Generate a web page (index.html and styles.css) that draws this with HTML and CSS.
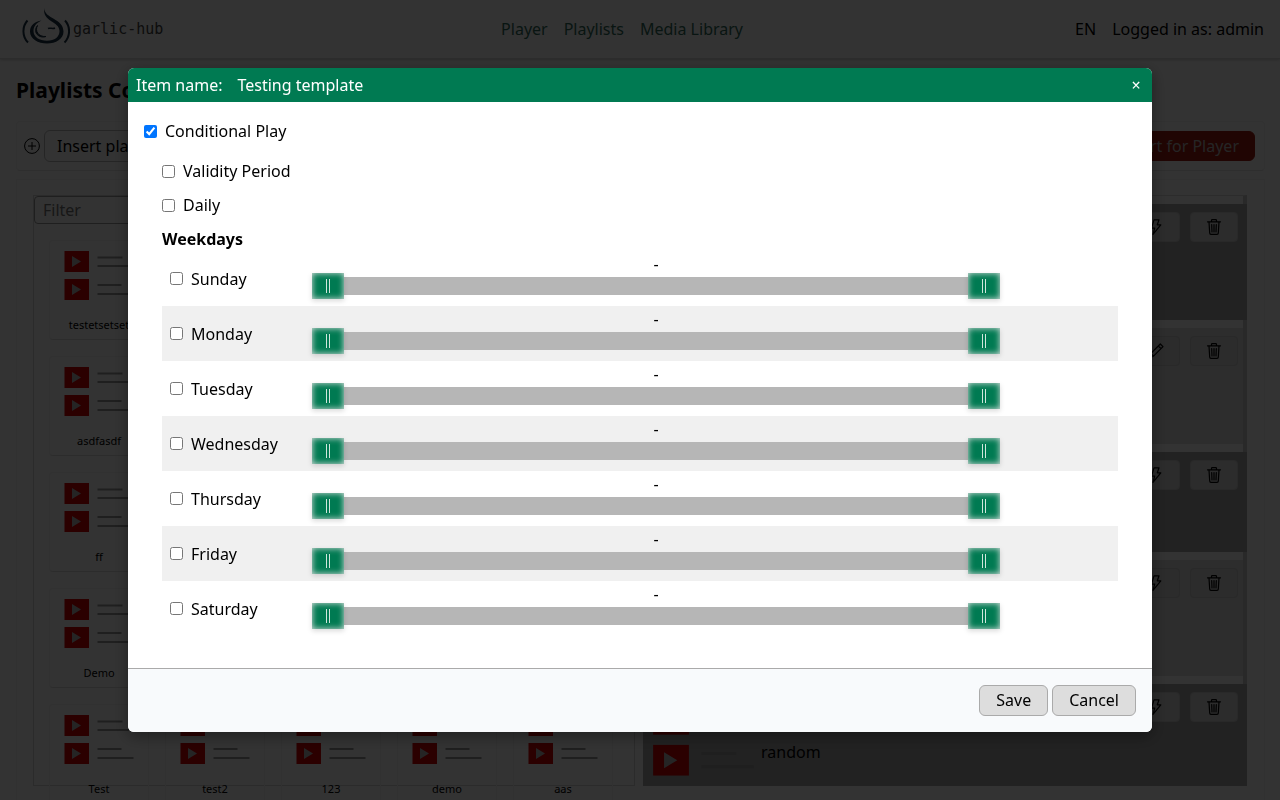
FILE: index.html
```html
<!DOCTYPE html>
<html lang="en">
<head>
  <meta charset="UTF-8" />
  <meta name="viewport" content="width=device-width, initial-scale=1" />
  <title>garlic-hub - Playlists</title>
  <link rel="stylesheet" href="styles.css">
</head>
<body>

<!-- shared icons -->
<svg class="sprite" aria-hidden="true">
  <symbol id="playlist" viewBox="0 0 70 50">
    <rect x="0.500" y="0" width="24.500" height="21" fill="#d40000"/>
    <path d="M8 5v11l9-5.500z" fill="#bbb"/>
    <path d="M33.500 6.500h25M33.500 15h36" stroke="#999" stroke-width="2"/>
    <rect x="0.500" y="28" width="24.500" height="21" fill="#d40000"/>
    <path d="M8 33v11l9-5.500z" fill="#bbb"/>
    <path d="M33.500 34h24M33.500 43h36" stroke="#999" stroke-width="2"/>
  </symbol>
  <symbol id="trash" viewBox="0 0 16 16">
    <path d="M1.500 2.800h13M5.500 2.500v-1a.8.8 0 0 1 .8-.8h3.400a.8.800 0 0 1 .8.8v1M3 3l.7 11a1.300 1.300 0 0 0 1.300 1.300h6a1.300 1.300 0 0 0 1.300-1.300L13 3M5.700 5.500l.3 7.500M8 5.500V13M10.300 5.500L10 13" fill="none" stroke="#000" stroke-width="1.200" stroke-linecap="round"/>
  </symbol>
  <symbol id="bolt" viewBox="0 0 16 16">
    <path d="M6 .8h5L9.300 5.800h3.500L5 15.300 6.700 9.200H3.500z" fill="none" stroke="#000" stroke-width="1.200" stroke-linejoin="round"/>
  </symbol>
  <symbol id="pencil" viewBox="0 0 16 16">
    <path d="M12.300 1l2.700 2.700L5.500 13.200 1 15l1.800-4.500zM10.300 3l2.700 2.700M2.800 10.500l2.700 2.700" fill="none" stroke="#000" stroke-width="1.200" stroke-linejoin="round"/>
  </symbol>
</svg>

<header class="navbar">
  <a class="brand" href="#">
    <svg class="logo" viewBox="0 0 48 42" aria-hidden="true">
      <path d="M22.300 0C22 11 41.500 10 41.500 23.500 41.500 31 34 35.500 25 35.500S8 31 8 23.500C8 17 13 13.500 19.500 12.500 14.500 15 11.500 18 11.500 23 11.500 29 17.500 32.800 25 32.800S37.500 29 37.500 23C37.500 13 20 14 22.300 0z" fill="#1d3446"/>
      <path d="M15.500 17.500c-3 5.500 1 11.500 8.500 11-6.500 2.500-14-4-8.500-11z" fill="#1d3446" stroke="#1d3446"/>
      <path d="M26 20.500c2-1.200 4.500.8 7-.5" fill="none" stroke="#1d3446" stroke-width="1.500"/>
      <path d="M5.500 12.500C0 18.500 0 28.500 6 34.500M43 12.500C48.500 18.500 48.500 28.500 42.500 34.500" fill="none" stroke="#1d3446" stroke-width="2"/>
    </svg>
    <span>garlic-hub</span>
  </a>
  <nav class="menu">
    <a href="#">Player</a>
    <a href="#">Playlists</a>
    <a href="#">Media Library</a>
  </nav>
  <div class="user">
    <span>EN</span>
    <span>Logged in as: admin</span>
  </div>
</header>

<main>
  <h1>Playlists Compose</h1>

  <div class="toolbar">
    <svg class="plus" viewBox="0 0 16 16" aria-hidden="true">
      <circle cx="8" cy="8" r="7.400" fill="none" stroke="#000"/>
      <path d="M8 4v8M4 8h8" stroke="#000"/>
    </svg>
    <button class="insert">Insert playlist</button>
    <button class="export">Export for Player</button>
  </div>

  <div class="workspace">
    <section class="library">
      <input class="filter" type="text" placeholder="Filter" aria-label="Filter">
      <div class="cards" id="cards"></div>
    </section>

    <section class="items">
      <article class="item dark">
        <div class="actions">
          <button aria-label="Trigger"><svg><use href="#bolt"/></svg></button>
          <button aria-label="Delete"><svg><use href="#trash"/></svg></button>
        </div>
      </article>
      <article class="item">
        <div class="actions">
          <button aria-label="Edit"><svg><use href="#pencil"/></svg></button>
          <button aria-label="Delete"><svg><use href="#trash"/></svg></button>
        </div>
      </article>
      <article class="item dark small">
        <div class="actions">
          <button aria-label="Trigger"><svg><use href="#bolt"/></svg></button>
          <button aria-label="Delete"><svg><use href="#trash"/></svg></button>
        </div>
      </article>
      <article class="item">
        <div class="actions">
          <button aria-label="Trigger"><svg><use href="#bolt"/></svg></button>
          <button aria-label="Delete"><svg><use href="#trash"/></svg></button>
        </div>
      </article>
      <article class="item dark last">
        <svg class="thumb"><use href="#playlist"/></svg>
        <span class="item-name">random</span>
        <div class="actions">
          <button aria-label="Trigger"><svg><use href="#bolt"/></svg></button>
          <button aria-label="Delete"><svg><use href="#trash"/></svg></button>
        </div>
      </article>
    </section>
  </div>
</main>

<div class="overlay">
  <div class="modal" role="dialog" aria-modal="true" aria-labelledby="modalTitle">
    <div class="modal-header">
      <span>Item name:</span>
      <span id="modalTitle">Testing template</span>
      <button class="close" aria-label="Close">×</button>
    </div>

    <div class="modal-body">
      <label class="check"><input type="checkbox" checked> Conditional Play</label>
      <div class="conditions">
        <label class="check"><input type="checkbox"> Validity Period</label>
        <label class="check"><input type="checkbox"> Daily</label>
        <h2>Weekdays</h2>
      </div>
      <div class="weekdays" id="weekdays"></div>
    </div>

    <div class="modal-footer">
      <button>Save</button>
      <button>Cancel</button>
    </div>
  </div>
</div>

<script>
  const days = ['Sunday', 'Monday', 'Tuesday', 'Wednesday', 'Thursday', 'Friday', 'Saturday'];

  // the first column is what stays visible beside the dialog
  const playlists = [
    'testetsetset', '', '', '', '',
    'asdfasdf', '', '', '', '',
    'ff', '', '', '', '',
    'Demo', '', '', '', '',
    'Test', 'test2', '123', 'demo', 'aas'
  ];

  document.getElementById('cards').innerHTML = playlists.map(name => `
    <div class="card">
      <svg><use href="#playlist"/></svg>
      <span>${name}</span>
    </div>`).join('');

  document.getElementById('weekdays').innerHTML = days.map(day => `
    <div class="day">
      <label class="check"><input type="checkbox"> ${day}</label>
      <div class="range">
        <output>-</output>
        <div class="range-inputs">
          <input type="range" min="0" max="96" value="0" aria-label="${day} from">
          <input type="range" min="0" max="96" value="96" aria-label="${day} until">
        </div>
      </div>
    </div>`).join('');
</script>

</body>
</html>
```
FILE: styles.css
```css
* { box-sizing: border-box; }
html, body {
  margin: 0;
  height: 100%;
  overflow: hidden;
}
body {
  font-family: "Noto Sans", "Open Sans", sans-serif;
  font-size: 16px;
  line-height: 24px;
  color: #000;
  background: #fff;
  display: flex;
  flex-direction: column;
}
button, input {
  font-family: inherit;
  font-size: inherit;
}
button { cursor: pointer; }
.sprite {
  display: block;
  width: 0;
  height: 0;
  position: absolute;
}

/* top bar */
.navbar {
  display: flex;
  align-items: center;
  justify-content: space-between;
  height: 59px;
  flex: none;
  padding: 0 16px;
  border-bottom: 1px solid #ddd;
  box-shadow: 0 1px 3px rgba(0, 0, 0, 0.2);
}
.brand {
  display: flex;
  align-items: center;
  gap: 3px;
  width: 153px;
  padding-left: 6px;
  font-family: "DejaVu Sans Mono", monospace;
  font-size: 15px;
  color: #444;
  text-decoration: none;
}
.logo {
  width: 48px;
  height: 42px;
  flex: none;
}
.menu, .user {
  display: flex;
  gap: 16px;
}
.menu a {
  color: #2f6b5a;
  text-decoration: none;
}

/* page */
main {
  flex: 1;
  min-height: 0;
  display: flex;
  flex-direction: column;
  padding: 17px 15px 0 16px;
}
h1 {
  margin: 0 0 17px;
  font-size: 21px;
  line-height: 28px;
}
.toolbar {
  display: flex;
  align-items: center;
  gap: 4px;
  height: 50px;
  padding: 0 9px 0 7px;
  border: 1px solid #f4f4f4;
  border-bottom-color: #e4e4e4;
  border-radius: 4px;
}
.plus {
  width: 16px;
  height: 16px;
}
.insert, .export {
  padding: 4px 12px;
  border: 1px solid #bbb;
  border-radius: 6px;
  background: #fff;
  line-height: 22px;
}
.export {
  margin-left: auto;
  padding: 3px 15px;
  color: #bbb;
  background: #a01c10;
  border-color: #a01c10;
}
.workspace {
  flex: 1;
  min-height: 0;
  display: flex;
  gap: 8px;
  margin-top: 8px;
  padding: 15px 17px 14px 16px;
  border: 1px solid #f4f4f4;
  border-bottom: 0;
}
.library, .items {
  flex: 1;
  min-width: 0;
}
.library { border: 1px solid #d4d4d4; }
.filter {
  display: block;
  width: 100%;
  height: 28px;
  padding: 0 8px;
  border: 1px solid #999;
  border-radius: 4px;
  background: #fff;
}
.cards {
  display: grid;
  grid-template-columns: repeat(5, 100px);
  gap: 16px;
  padding: 16px 15px;
}
.card {
  display: flex;
  flex-direction: column;
  align-items: center;
  justify-content: space-between;
  height: 100px;
  padding: 10px 0 4px;
  border: 1px solid #f2f2f2;
  border-bottom-color: #ddd;
  border-radius: 4px;
  font-size: 11px;
  line-height: 20px;
}
.card svg {
  width: 70px;
  height: 50px;
}

/* playlist items */
.items {
  display: flex;
  flex-direction: column;
  gap: 8px;
  padding-top: 8px;
  border-top: 1px solid #ddd;
  border-right: 4px solid #ccc;
}
.item {
  display: flex;
  flex: none;
  align-items: flex-start;
  height: 116px;
  padding: 8px 5px 8px 9px;
  background: #dedede;
}
.item.dark {
  margin-right: -4px;
  padding-right: 9px;
  background: #aaa;
}
.item.small { height: 100px; }
.item.last {
  flex: 1;
  min-height: 0;
}
.item .thumb {
  width: 103px;
  height: 73px;
  margin-top: 12px;
}
.item-name {
  padding: 48px 0 0 6px;
}
.actions {
  display: flex;
  gap: 10px;
  margin-left: auto;
}
.actions button {
  display: flex;
  align-items: center;
  justify-content: center;
  width: 48px;
  height: 30px;
  padding: 0;
  border: 1px solid #cacaca;
  border-radius: 4px;
  background: #dadada;
}
.actions svg {
  width: 16px;
  height: 16px;
}

/* dialog */
.overlay {
  position: fixed;
  inset: 0;
  display: flex;
  align-items: center;
  justify-content: center;
  background: rgba(0, 0, 0, 0.8);
}
.modal {
  width: 80%;
  border-radius: 6px;
  overflow: hidden;
  background: #fff;
  box-shadow: 0 4px 16px rgba(0, 0, 0, 0.4);
}
.modal-header {
  display: flex;
  align-items: center;
  gap: 15px;
  padding: 5px 8px;
  color: #fff;
  background: #007a52;
}
.close {
  margin-left: auto;
  width: 16px;
  padding: 0;
  border: 0;
  background: none;
  color: #fff;
  line-height: 24px;
}
.modal-body { padding: 17px 16px 32px; }
.check {
  display: flex;
  align-items: center;
  gap: 8px;
}
.check input {
  width: 13px;
  height: 13px;
  margin: 0;
  flex: none;
}
.conditions {
  display: flex;
  flex-direction: column;
  gap: 10px;
  padding: 16px 18px 0;
}
h2 {
  margin: 0;
  font-size: 16px;
  line-height: 24px;
}
.weekdays { margin: 0 18px; }
.day {
  display: flex;
  align-items: center;
  padding-left: 8px;
}
.day:nth-child(even) { background: #f0f0f0; }
.day .check { width: 142px; }
.range {
  width: 688px;
  padding: 2px 0 7px;
}
.range output {
  display: block;
  padding-top: 1px;
  height: 20px;
  line-height: 20px;
  text-align: center;
}

/* two sliders share one track */
.range-inputs {
  display: grid;
  align-items: center;
  height: 26px;
  background: linear-gradient(#b6b6b6, #b6b6b6) center / 100% 18px no-repeat;
}
.range-inputs input {
  grid-area: 1 / 1;
  appearance: none;
  width: 100%;
  height: 26px;
  margin: 0;
  background: none;
  pointer-events: none;
}
.range-inputs input::-webkit-slider-thumb {
  appearance: none;
  width: 32px;
  height: 26px;
  pointer-events: auto;
  cursor: pointer;
  background:
    linear-gradient(90deg, #cfe6dc 1px, transparent 1px 3px, #cfe6dc 3px) center / 4px 14px no-repeat,
    #007a52;
  box-shadow: inset 0 0 6px #e4e4e4, 0 2px 5px rgba(0, 0, 0, 0.15);
}

.modal-footer {
  display: flex;
  justify-content: flex-end;
  gap: 4px;
  padding: 16px;
  border-top: 1px solid #aaa;
  background: #f8fafc;
}
.modal-footer button {
  padding: 4px 16px;
  border: 1px solid #aaa;
  border-radius: 6px;
  background: #ddd;
  line-height: 21px;
}
```
